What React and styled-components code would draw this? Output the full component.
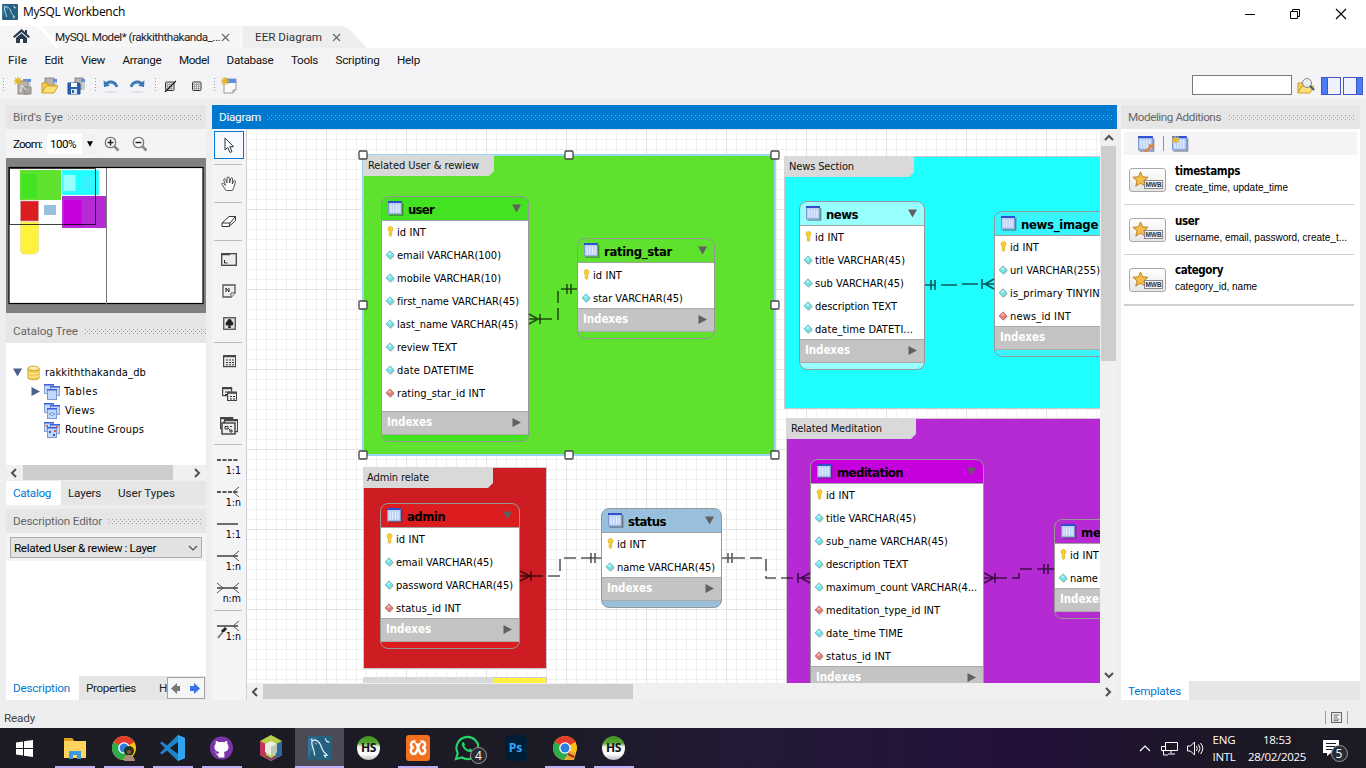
import React, { useLayoutEffect, useRef, useState } from 'react';
import styled, { createGlobalStyle, css } from 'styled-components';

const UI = `Roboto, "Liberation Sans", sans-serif`;
const TAHOMA = `"DejaVu Sans Condensed", "DejaVu Sans", sans-serif`;
const SEGOE = `"Open Sans", "Noto Sans", sans-serif`;

const GlobalStyle = createGlobalStyle`
  * { box-sizing: border-box; }
  html, body { margin: 0; padding: 0; overflow: hidden; }
  body { font: 11.7px ${UI}; color: #111; }
  svg { display: block; flex: none; }
`;

/* Text whose tracking is adjusted so that it takes the given width. */
const FitSpan = styled.span`
  display: inline-block;
  white-space: nowrap;
`;
function Fit({ w, children }) {
  const ref = useRef(null);
  const [spacing, setSpacing] = useState(0);
  useLayoutEffect(() => {
    const natural = ref.current.getBoundingClientRect().width;
    setSpacing((w - natural) / String(children).length);
  }, [w, children]);
  return <FitSpan ref={ref} style={{ letterSpacing: `${spacing}px` }}>{children}</FitSpan>;
}

const Screen = styled.div`
  width: 1366px;
  height: 768px;
  display: flex;
  flex-direction: column;
  background: #eeeef0;
  overflow: hidden;
`;

/* ---------- window frame ---------- */
const TitleBar = styled.header`
  height: 26px;
  display: flex;
  background: #fff;
  justify-content: space-between;
`;
const TitleLeft = styled.div`
  display: flex;
  align-items: center;
  gap: 5px;
  padding: 0 0 3px 2px;
  font: 12px ${SEGOE};
  color: #000;
`;
const WindowButtons = styled.div`
  display: flex;
  padding: 7px 19px 0 0;
  gap: 34px;
`;
const TabStrip = styled.div`
  height: 22px;
  display: flex;
  background: #fff;
`;
const HomeTab = styled.div`
  width: 56px;
  padding: 2px 0 0 13px;
  background: #f6f6f7;
  clip-path: polygon(0 0, 35px 0, 40px 3px, 56px 100%, 0 100%);
`;
const DocTab = styled.div`
  display: flex;
  align-items: center;
  background: ${p => (p.$active ? '#eeeef0' : '#f6f6f7')};
  ${p => p.$active
    ? css`width: 125px; margin-left: 1px; padding-left: 13px; gap: 10px; color: #333;
        clip-path: polygon(0 0, 101px 0, 107px 3px, 125px 100%, 0 100%);`
    : css`width: 199px; margin-left: -14px; padding-left: 13px; gap: 1px; color: #222;
        clip-path: polygon(0 0, 100% 0, 100% 100%, 18px 100%);`}
`;
const MenuBar = styled.nav`
  height: 24px;
  display: flex;
  align-items: center;
  gap: 17.5px;
  padding-left: 8px;
  background: #f4f4f7;
`;
const Toolbar = styled.div`
  height: 27px;
  display: flex;
  align-items: center;
  background: #f4f4f7;
  padding-right: 3px;
`;
const Slot = styled.div`
  width: ${p => p.$w}px;
  display: flex;
  justify-content: center;
`;
const Grip = styled.div`
  width: 1px;
  height: 15px;
  background: repeating-linear-gradient(#999 0 1px, transparent 1px 3px);
`;
const Spacer = styled.div`flex: 1;`;
const SearchBox = styled.div`
  width: 100px;
  height: 20px;
  border: 1px solid #7a7a7a;
  background: #fff;
  margin-right: 5px;
  margin-top: -2px;
`;
const PanelToggle = styled.div`
  width: 20px;
  height: 18px;
  margin-left: ${p => (p.$right ? 2 : 6)}px;
  border: 1px solid #4059c4;
  background: ${p => (p.$right
    ? 'linear-gradient(90deg, #f0f1fc 12px, #4059c4 12px 13px, #4a7df5 13px)'
    : 'linear-gradient(90deg, #4a7df5 5px, #4059c4 5px 6px, #f0f1fc 6px)')};
`;

/* ---------- docked panels ---------- */
const Body = styled.main`
  height: 601px;
  display: flex;
  padding: 6px 6px 0;
`;
const LeftDock = styled.aside`
  width: 200px;
  display: flex;
  flex-direction: column;
`;
const PanelHead = styled.div`
  height: ${p => (p.$tall ? 30 : 24)}px;
  flex: none;
  display: flex;
  align-items: center;
  gap: ${p => p.$gap || 5}px;
  padding: ${p => (p.$tall ? 6 : 0)}px ${p => (p.$flush ? 0 : 5)}px 0 7px;
  background: ${p => (p.$blue ? '#0078d0' : '#e6e6e6')};
  color: ${p => (p.$blue ? '#fff' : '#666')};
`;
const Dots = styled.div`
  flex: 1;
  height: 5px;
  --dot: ${p => (p.$blue ? '#5eaee6' : '#a0a0a0')};
  background-image: linear-gradient(90deg, var(--dot) 1px, transparent 1px),
    linear-gradient(90deg, var(--dot) 1px, transparent 1px),
    linear-gradient(90deg, var(--dot) 1px, transparent 1px);
  background-size: 4px 1px;
  background-position: 0 0, 2px 2px, 0 4px;
  background-repeat: repeat-x;
`;
const ZoomRow = styled.div`
  height: 29px;
  display: flex;
  align-items: center;
  padding-left: 7px;
  background: #f4f4f7;
  color: #000;
`;
const ZoomField = styled.div`
  display: flex;
  align-items: center;
  margin: 0 5px 0 5px;
  height: 20px;
  background: #fff;
  padding-left: 3px;
`;
const ZoomArrow = styled.div`
  width: 16px;
  height: 20px;
  margin-left: 6px;
  display: flex;
  align-items: center;
  justify-content: center;
  background: #f2f2f2;
`;
const Tree = styled.div`
  height: 122px;
  padding-top: 20px;
  background: #fff;
  font: 11px ${TAHOMA};
  color: #000;
`;
const TreeRow = styled.div`
  height: 19px;
  display: flex;
  align-items: center;
  gap: ${p => p.$gap || 5}px;
  padding-left: ${p => p.$indent}px;
`;
const HScroll = styled.div`
  height: 15px;
  flex: none;
  display: flex;
  align-items: center;
  justify-content: space-between;
  background: #f0f0f0;
  padding: 0 4px 0 3px;
  margin-top: ${p => p.$gap || 0}px;
`;
const HThumb = styled.div`
  height: 15px;
  width: ${p => p.$w}px;
  margin: 0 auto 0 ${p => p.$x}px;
  background: #cdcdcd;
`;
const Tabs = styled.div`
  height: ${p => p.$h || 24}px;
  display: flex;
  background: #e6e6e6;
  color: #222;
`;
const Tab = styled.div`
  display: flex;
  align-items: center;
  overflow: hidden;
  padding-left: 7px;
  width: ${p => p.$w}px;
  ${p => p.$on && css`background: #fff; color: #0078d0;`}
`;
const TabArrows = styled.div`
  width: 38px;
  height: 22px;
  margin: 1px 1px 0 0;
  border: 1px solid #a5a5a5;
  background: #f5f5f5;
  display: flex;
  align-items: center;
  justify-content: space-around;
`;
const ComboRow = styled.div`
  height: 28px;
  padding: 4px 4px 0;
  background: #f4f4f7;
`;
const Combo = styled.div`
  height: 21px;
  display: flex;
  align-items: center;
  justify-content: space-between;
  padding: 0 3px;
  border: 1px solid #acacac;
  background: #e2e2e2;
  color: #000;
`;
const Blank = styled.div`
  flex: 1;
  background: #fff;
`;
const HGap = styled.div`
  height: 4px;
  flex: none;
`;
const LowBlank = styled.div`
  height: 115px;
  background: #fff;
`;

/* ---------- diagram editor ---------- */
const Center = styled.section`
  width: 905px;
  margin: 0 4px 0 6px;
  display: flex;
  flex-direction: column;
`;
const Editor = styled.div`
  display: flex;
  height: 571px;
`;
const ToolColumn = styled.div`
  width: 35px;
  padding: 2px 4px 0 2px;
  background: #f4f4f7;
  border-right: 1px solid #d0d0d4;
`;
const Tool = styled.div`
  height: ${p => p.$h}px;
  width: 30px;
  display: flex;
  align-items: center;
  justify-content: center;
  ${p => p.$on && css`border: 1px solid #0078d7; background: #f6fafe;`}
`;
const ToolLine = styled.div`
  height: 1px;
  background: #bbb;
  margin: ${p => p.$t}px 0 ${p => p.$b}px;
`;
const RelTool = styled.div`
  height: 32px;
  padding: 9px 1px 0 2px;
  font: 10.500px/9px "DejaVu Sans Condensed", "DejaVu Sans", sans-serif;
  text-align: right;
  color: #000;
`;
const View = styled.div`
  width: 870px;
`;
const ViewTop = styled.div`
  display: flex;
  height: 554px;
`;
const Canvas = styled.div`
  position: relative;
  width: 853px;
  height: 554px;
  overflow: hidden;
  background-color: #fff;
  background-image: linear-gradient(90deg, #e3e3e3 1px, transparent 1px),
    linear-gradient(#e3e3e3 1px, transparent 1px),
    linear-gradient(90deg, #f0f0f0 1px, transparent 1px),
    linear-gradient(#f0f0f0 1px, transparent 1px);
  background-size: 80px 80px, 80px 80px, 10px 10px, 10px 10px;
  background-position: -1px 0;
`;
const VScroll = styled.div`
  width: 17px;
  padding: 4px 1px 3px 1px;
  display: flex;
  flex-direction: column;
  align-items: center;
  background: #f0f0f0;
`;
const VThumb = styled.div`
  width: 15px;
  height: 215px;
  margin: 3px 0 auto;
  background: #cdcdcd;
`;
const LayerBox = styled.div`
  position: absolute;
  left: ${p => p.$x - 247}px;
  top: ${p => p.$y - 129}px;
  width: ${p => p.$w}px;
  height: ${p => p.$h}px;
  background: ${p => p.$color};
  border: ${p => (p.$on ? '2px solid #98d6f4' : '1px solid #cfc6d0')};
`;
const LayerTab = styled.div`
  width: ${p => (p.$on ? 131 : 130)}px;
  height: 21px;
  margin: -1px 0 0 -1px;
  padding: 0 0 1px ${p => p.$pad}px;
  display: flex;
  align-items: center;
  background: #d9d9d9;
  color: #111;
  font: 11px ${TAHOMA};
  clip-path: polygon(0 0, 100% 0, 100% calc(100% - 5px), calc(100% - 5px) 100%, 0 100%);
`;
const TableBox = styled.div`
  position: absolute;
  left: ${p => p.$x - 247}px;
  top: ${p => p.$y - 129}px;
  width: ${p => p.$w}px;
  border: 1px solid #979797;
  border-radius: 8px;
  overflow: hidden;
  background: ${p => p.$color};
  font: 11px ${TAHOMA};
  color: #000;
`;
const TableHead = styled.div`
  height: 24px;
  display: flex;
  align-items: center;
  gap: 4px;
  padding: 0 7px 0 6px;
  border-bottom: 1px solid #a2a2a2;
  font-size: 13px;
  font-weight: bold;
`;
const TableName = styled.div`
  flex: 1;
  min-width: 0;
  padding-top: 2px;
`;
const TableBody = styled.div`
  height: ${p => p.$h}px;
  padding-top: ${p => p.$pad || 0}px;
  background: #fff;
`;
const Column = styled.div`
  height: 23px;
  display: flex;
  align-items: center;
  gap: 2px;
  padding: 0 0 0 4px;
`;
const Mark = styled.div`
  width: 10px;
  display: flex;
  justify-content: center;
  margin: 0 0 2px -1px;
  padding-right: ${p => (p.$key ? 0 : 1)}px;
`;
const IndexRow = styled.div`
  height: 24px;
  display: flex;
  align-items: center;
  justify-content: space-between;
  padding: 0 7px 2px 5px;
  border: 1px solid #aaa;
  border-width: 1px 0;
  background: #c4c4c4;
  color: #fff;
  font-size: 11.5px;
  font-weight: bold;
`;
const TableFoot = styled.div`height: 6px;`;
const Links = styled.svg`
  position: absolute;
  inset: 0;
`;

/* ---------- modeling additions ---------- */
const RightDock = styled.aside`
  width: 239px;
  display: flex;
  flex-direction: column;
  background: #fff;
`;
const MiniBar = styled.div`
  height: 23px;
  margin: 3px 3px 0;
  padding-left: 14px;
  display: flex;
  align-items: center;
  gap: 8px;
  background: #f4f4f7;
`;
const MiniSep = styled.div`
  width: 1px;
  height: 15px;
  background: #8a93ad;
`;
const Template = styled.div`
  height: ${p => p.$h}px;
  display: flex;
  margin: 0 6px 0 3px;
  padding: ${p => p.$t}px 0 0 5px;
  gap: 9px;
  border-bottom: ${p => p.$line || 1}px solid #cfcfcf;
`;
const TemplateText = styled.div`
  display: flex;
  flex-direction: column;
  font: 10px/14px "Liberation Sans", sans-serif;
  color: #000;
  margin-top: -3px;
`;
const TemplateTitle = styled.div`
  font: bold 11.5px/15px ${TAHOMA};
  margin-bottom: 2px;
`;
const Badge = styled.div`
  width: 37px;
  height: 24px;
  margin-top: ${p => p.$t}px;
  border: 1px solid #a8a8a8;
  border-radius: 3px;
  background: linear-gradient(#fff, #e6e6e6);
  display: flex;
  padding: 2px 0 0 2px;
`;
const BadgeLabel = styled.div`
  height: 9px;
  width: 19px;
  margin: 9px 0 0 -5px;
  background: #f4f4f4;
  border: 1px solid #888;
  color: #333;
  font: bold 6.5px/7px "Liberation Sans", sans-serif;
  text-align: center;
  z-index: 1;
`;

/* ---------- status bar and taskbar ---------- */
const StatusBar = styled.footer`
  height: 28px;
  display: flex;
  align-items: center;
  padding: 7px 18px 0 4px;
  gap: 5px;
  color: #444;
`;
const StatusSep = styled.div`
  width: 1px;
  height: 13px;
  background: #9a9ab0;
`;
const Taskbar = styled.div`
  height: 40px;
  display: flex;
  background: linear-gradient(90deg, #1c1c24 0%, #1c1b26 40%, #231936 55%, #24103a 75%, #1c1724 90%, #1b1b24 100%);
  color: #fff;
`;
const Task = styled.div`
  width: 49px;
  display: flex;
  align-items: center;
  justify-content: center;
  box-shadow: ${p => (p.$open ? 'inset 0 -2px #bfaef5' : 'none')};
  background: ${p => (p.$active ? '#4b4a57' : 'transparent')};
  ${p => p.$open && !p.$active && css`width: 40px; margin: 0 4px 0 5px; padding-right: 1px;`}
`;
const Start = styled.div`
  width: 50px;
  padding-right: 2px;
  display: flex;
  align-items: center;
  justify-content: center;
`;
const Tray = styled.div`
  margin-left: auto;
  display: flex;
  align-items: center;
  padding-right: 11px;
  font: 11.5px/17px ${SEGOE};
  text-align: center;
`;
const TrayText = styled.div`
  width: ${p => p.$w}px;
  margin-left: ${p => p.$l}px;
  margin-top: -1px;
`;

/* ---------- drawings ---------- */
const Dolphin = ({ size = 15 }) => (
  <svg width={size} height={size} viewBox="0 0 16 16">
    <rect width="16" height="16" rx="1" fill="#24607f" />
    <path d="M0 16V1h6z" fill="#3d81a3" opacity=".6" />
    <path d="M4.500 13C4 10 3.800 9 3.200 7.500 2.300 5 2 4 3 3c2.500-.8 4.500 1 5.500 3.200.6 1.500.8 2.800 2 4.300l2.300 2.300-2 .1 1.200 1.600" fill="none" stroke="#e6f2f8" strokeWidth=".8" />
    <path d="M3 3L2 2M5 5l.8.3" stroke="#e6f2f8" strokeWidth=".8" />
    <path d="M11.500 1.500l.8 1.800 2 .8-1.800-.1z" fill="#fff" stroke="#fff" strokeWidth=".4" />
  </svg>
);
const HomeIcon = () => (
  <svg width="17" height="16" viewBox="0 0 17 16">
    <path d="M8.500 1L0 8.500l1.500 1.500 7-6 7 6L17 8.500 14 6V2h-2v2z" fill="#2b3a50" />
    <path d="M3 10l5.500-4.700L14 10v5h-4v-4H7v4H3z" fill="#2b3a50" />
  </svg>
);
const TabClose = () => (
  <svg width="9" height="9" viewBox="0 0 9 9"><path d="M1 1l7 7M8 1L1 8" stroke="#666" strokeWidth="1.1" /></svg>
);
const Spark = () => (
  <path d="M4 0v8M0 4h8M1 1l6 6M7 1L1 7" stroke="#e6b62c" strokeWidth="1.300" />
);
const NewModel = () => (
  <svg width="18" height="18" viewBox="0 0 18 18">
    <rect x="9" y="2" width="8" height="11" fill="#d4d8e0" /><rect x="9" y="2" width="8" height="3" fill="#5b90e8" />
    <rect x="4" y="4" width="10" height="13" fill="#b8b4ad" stroke="#8b8984" /><path d="M10 10h7v7h-7z" fill="#aaa69f" stroke="#8b8984" /><path d="M6 15l2-7 4 5" fill="none" stroke="#e8e8e8" />
    <Spark />
  </svg>
);
const FolderIcon = ({ lens }) => (
  <svg width="18" height="18" viewBox="0 0 18 18">
    {!lens && <><rect x="4" y="1" width="9" height="11" fill="#b8b4ad" stroke="#8b8984" /><rect x="13" y="2" width="3" height="8" fill="#c9cdd6" /><rect x="12" y="2" width="4" height="3" fill="#5b90e8" /></>}
    <path d="M1 16V6h5l1 2h7v3" fill="#f3cf5a" stroke="#c79a25" />
    <path d="M1 16l4-7h12l-4 7z" fill="#fbe07b" stroke="#d2a22b" />
    {lens && <><circle cx="10" cy="6" r="4.500" fill="#e8eef2" fillOpacity=".85" stroke="#888" /><path d="M13 9l4 4" stroke="#555" strokeWidth="2" /></>}
  </svg>
);
const SaveIcon = () => (
  <svg width="18" height="18" viewBox="0 0 18 18">
    <rect x="8" y="1" width="8" height="11" fill="#b8b4ad" stroke="#8b8984" /><rect x="14" y="2" width="4" height="3" fill="#5b90e8" /><rect x="15" y="5" width="3" height="8" fill="#c9cdd6" />
    <path d="M1 6h11l1 1v10H1z" fill="#2962aa" stroke="#1f4f8e" /><rect x="4" y="6" width="6" height="4" fill="#fff" /><rect x="4" y="12" width="6" height="5" fill="#dce6f2" /><rect x="5" y="13" width="2" height="3" fill="#2962aa" />
  </svg>
);
const Undo = ({ flip }) => (
  <svg width="16" height="14" viewBox="0 0 16 14">
    <g transform={flip ? 'translate(16 0) scale(-1 1)' : undefined}>
      <path d="M.5 1.500L1 8l6-1.300-2-1.700c3-1.300 6-.5 8 3.500l2.200-1.200C13.500 2 8 0 3 3z" fill="#3b7bb8" />
      <ellipse cx="8" cy="13" rx="7" ry="1" fill="#e0e0e4" />
    </g>
  </svg>
);
const GridIcon = ({ off }) => (
  <svg width="12" height="12" viewBox="0 0 12 12">
    <rect x="1.500" y="2" width="8.500" height="8.500" rx="1" fill="#eee" stroke="#333" />
    <path d="M3.500 2v8M5.500 2v8M7.500 2v8M2 4.500h8M2 6.500h8M2 8.500h8" stroke="#999" strokeWidth=".8" />
    {off && <path d="M1 12L12 1" stroke="#111" strokeWidth="1.200" />}
  </svg>
);
const NewNote = () => (
  <svg width="16" height="17" viewBox="0 0 16 17">
    <path d="M3 2h12v11l-3 3H3z" fill="#fafafa" stroke="#999" /><rect x="3" y="2" width="12" height="4" fill="#5b90e8" />
    <path d="M12 16v-3h3" fill="#ddd" stroke="#999" /><Spark />
  </svg>
);
const ZoomGlass = ({ plus }) => (
  <svg width="16" height="16" viewBox="0 0 16 16">
    <circle cx="6.500" cy="6.500" r="5.200" fill="#fafafa" stroke="#777" strokeWidth="1.300" />
    <path d={plus ? 'M3.500 6.500h6M6.500 3.500v6' : 'M3.500 6.500h6'} stroke="#222" strokeWidth="1.500" />
    <path d="M10.500 10.500l4 4" stroke="#888" strokeWidth="2.500" />
  </svg>
);
const Triangle = ({ dir, color = '#606060', s = 9 }) => (
  <svg width={s} height={s} viewBox="0 0 9 9">
    <path d={dir === 'down' ? 'M0 .5h9L4.500 8.500z' : 'M.5 0v9L9 4.500z'} fill={color} />
  </svg>
);
const Chevron = ({ dir, color = '#505050', s = 10, t = 2 }) => {
  const d = { left: 'M7 1L3 5l4 4', right: 'M3 1l4 4-4 4', up: 'M1 7l4-4 4 4', down: 'M1 3l4 4 4-4' }[dir];
  return <svg width={s} height={s} viewBox="0 0 10 10"><path d={d} fill="none" stroke={color} strokeWidth={t} /></svg>;
};
const DbIcon = () => (
  <svg width="13" height="16" viewBox="0 0 14 16">
    <path d="M1 3v10c0 3 12 3 12 0V3" fill="#f2cc4f" stroke="#c89d28" />
    <path d="M1 7c0 2.500 12 2.500 12 0M1 10.500c0 2.500 12 2.500 12 0" fill="none" stroke="#fff3b5" />
    <ellipse cx="7" cy="3" rx="6" ry="2.300" fill="#fdeeb0" stroke="#c89d28" />
  </svg>
);
const StackIcon = ({ kind }) => (
  <svg width="16" height="16" viewBox="0 0 16 16">
    <rect x=".5" y=".5" width="9" height="9" fill="#c4d6f5" stroke="#88a4dc" /><rect width="10" height="1.500" fill="#3a5fd8" />
    <rect x="6.500" y="2.500" width="9" height="9" fill="#c4d6f5" stroke="#88a4dc" /><rect x="6" y="2" width="10" height="1.500" fill="#3a5fd8" />
    <rect x="3.500" y="5.500" width="9" height="10" fill="#c3d7f8" stroke="#7b98d8" /><rect x="3" y="5" width="10" height="1.500" fill="#3a5fd8" />
    {kind === 'view' && <path d="M5 11q3-3 6 0-3 3-6 0z" fill="#eef" stroke="#6a94d8" />}
    {kind === 'routine' && <><path d="M5 9h2v2H5zM9 12h2v2H9z" fill="#2a59c0" /><path d="M10 8h2v2h-2zM12 4h2v2h-2z" fill="#e05a48" /><path d="M2 3h2v2H2z" fill="#e05a48" /></>}
  </svg>
);
const TableIcon = ({ spark, wrench, s = 15 }) => (
  <svg width={s + 1} height={s} viewBox="0 0 16 15">
    <path d="M1.500 14h13.200V2" fill="none" stroke="#333" strokeOpacity=".5" strokeWidth="1.400" />
    <rect x=".5" y="1" width="13" height="12" fill="#b9cff4" stroke="#7d99cf" /><rect width="14" height="2" fill="#2d4fd0" />
    <path d="M3 3.500v8M5.700 3.500v8M8.400 3.500v8M11 3.500v8" stroke="#eef4ff" strokeWidth="1" />
    {spark && <g transform="translate(-.5 -.5) scale(.95)"><Spark /></g>}
    {wrench && <path d="M5.500 14.500l5-4.500-.5-3 2.500 1.500L14.500 7l.5 3-3 1.500-4.500 3.500z" fill="#e97b30" />}
  </svg>
);
const KeyIcon = () => (
  <svg width="9" height="11" viewBox="0 0 9 11">
    <path d="M4.500.5C1.600.5 1.400 4 3.200 5.300V9.500l1.300 1 1.300-1V5.300C7.600 4 7.400.5 4.500.5z" fill="#f8cd2e" stroke="#d9a92a" strokeWidth=".6" />
  </svg>
);
const Diamond = ({ red }) => (
  <svg width="10" height="10" viewBox="0 0 10 10">
    <path d="M5.500 1.500L10 6l-4 4-4-4z" fill="#000" opacity=".2" />
    <path d="M5 .8L9 5 5 9 1 5z" fill={red ? '#e0807c' : '#74e2e6'} stroke={red ? '#c06864' : '#6ab4ba'} strokeWidth=".8" />
    <path d="M5 2L3 4.500h3z" fill="#fff" opacity=".7" />
  </svg>
);
const StarIcon = () => (
  <svg width="17" height="17" viewBox="0 0 18 18">
    <path d="M9 1l2.200 5.200 5.800.4-4.400 3.800 1.300 5.600L9 13l-5 3 1.400-5.600L1 6.600l5.800-.4z" fill="#f6bd48" stroke="#b9801d" />
  </svg>
);

const Pointer = () => (
  <svg width="14" height="17" viewBox="0 0 14 17"><path d="M3 1v12l2.700-2.500 2.300 5 2-1-2.200-4.800h3.700z" fill="#fff" stroke="#333" /></svg>
);
const Hand = () => (
  <svg width="16" height="16" viewBox="0 0 16 16">
    <path d="M5 14.500L1 8.500c-.8-1.500 1-2 2-.5L4.500 9.500 2.800 4c-.3-1.500 1.400-1.800 1.900-.5L6 7V2c0-1.600 2-1.600 2.200 0L8.700 7l1-4.500c.4-1.400 2-1 1.900.5L11.300 8l1.500-3c.6-1.200 2-.7 1.700.6L13 11l-1.500 3.500z" fill="#fff" stroke="#444" strokeWidth=".9" />
  </svg>
);
const Eraser = () => (
  <svg width="16" height="13" viewBox="0 0 16 13">
    <path d="M1 8L8 1.500h6.500L9 8zM1 8v3.500h7L9 8M8 11.500l6.500-6v-4" fill="#fff" stroke="#333" />
  </svg>
);
const LayerTool = () => (
  <svg width="16" height="13" viewBox="0 0 16 13">
    <rect x=".7" y=".7" width="14.600" height="11.600" fill="#eee" stroke="#444" strokeWidth="1.300" /><path d="M1 1.500h8" stroke="#444" strokeWidth="1.500" /><path d="M3.500 7v3h3" fill="none" stroke="#222" />
  </svg>
);
const NoteTool = () => (
  <svg width="14" height="14" viewBox="0 0 14 14">
    <path d="M1 1h12v8l-4 4H1z" fill="#eee" stroke="#555" strokeWidth="1.300" /><path d="M9 13V9h4" fill="#fff" stroke="#555" /><path d="M4 8V4l3 4V4" fill="none" stroke="#222" />
  </svg>
);
const ImageTool = () => (
  <svg width="13" height="13" viewBox="0 0 13 13">
    <rect x=".7" y=".7" width="11.600" height="11.600" fill="#ddd" stroke="#555" strokeWidth="1.300" />
    <path d="M6.500 2C4.500 2 4.500 4 4 4.500 2.500 5 2 8.300 4 8.500h1.700L5 11h3L7.300 8.500H9c2-.2 1.500-3.500 0-4C8.500 4 8.500 2 6.500 2z" fill="#222" />
  </svg>
);
const MiniTable = ({ x = 0, y = 0, w = 12, h = 11 }) => (
  <g transform={`translate(${x} ${y})`}>
    <rect x=".6" y=".6" width={w} height={h} fill="#eee" stroke="#444" strokeWidth="1.200" /><path d={`M1 1.500h${w}`} stroke="#444" strokeWidth="1.500" />
    <path d={`M3 5h${w - 4}M3 7.500h${w - 4}`} stroke="#333" strokeWidth="1.100" strokeDasharray="2 1" />
  </g>
);
const TableTool = () => (
  <svg width="13" height="13" viewBox="0 0 13 13"><MiniTable /><path d="M3 9.800h8" stroke="#333" strokeDasharray="2 1" /></svg>
);
const ViewTool = () => (
  <svg width="15" height="14" viewBox="0 0 15 14"><MiniTable w={9} h={8} /><MiniTable x={5} y={4.500} w={9} h={8.500} /></svg>
);
const RoutineTool = () => (
  <svg width="18" height="18" viewBox="0 0 18 18">
    <MiniTable w={12} h={11} /><MiniTable x={4} y={2} w={13} h={12} /><rect x="2" y="6" width="13" height="11" fill="#eee" stroke="#333" strokeWidth="1.300" />
    <path d="M5 9.500h3v2.500H5zM10 9.500h2M10 13h2v2h-2zM8 11l2 2" fill="none" stroke="#333" />
  </svg>
);
const RelLine = ({ left, right, dashed, dropper }) => (
  <svg width="24" height="12" viewBox="0 0 24 12">
    <path d="M1 6h21" stroke="#222" strokeWidth="1.300" strokeDasharray={dashed ? '4 1.500' : undefined} />
    {right && <path d="M23 1l-6 5 6 5" fill="none" stroke="#555" strokeWidth="1" />}
    {left && <path d="M1 1l6 5-6 5" fill="none" stroke="#555" strokeWidth="1" />}
    {dropper && <path d="M10 8l-4 4" stroke="#222" strokeWidth="3" />}
  </svg>
);
/* Tip of the pick-relation dropper, beside its caption. */
const DropperTip = styled.svg`
  float: left;
  margin: -1px 0 0 1px;
`;

const Overview = () => (
  <svg width="200" height="155" viewBox="6 158 200 155">
    <rect x="6" y="158" width="200" height="155" fill="#808080" />
    <rect x="9" y="167.500" width="194" height="136" fill="#fff" stroke="#000" strokeWidth="1.200" />
    <rect x="20" y="170" width="41" height="30" fill="#5ee22e" /><rect x="22" y="174" width="15" height="24" fill="#43e322" /><rect x="40" y="178" width="14" height="10" fill="#5ee22e" />
    <rect x="62" y="170" width="37" height="25" fill="#20ffff" stroke="#9de8e8" strokeWidth=".6" /><rect x="63.500" y="175" width="12" height="16" fill="#98ffff" /><rect x="82" y="176" width="12" height="14" fill="#38f4ff" />
    <rect x="20.500" y="201" width="18" height="20" fill="#db1d20" stroke="#c8a0a0" strokeWidth=".6" />
    <rect x="44" y="205" width="12" height="10" fill="#98bfdb" />
    <rect x="62" y="196" width="44.500" height="32" fill="#b52ad2" /><rect x="64" y="200" width="17.500" height="26" fill="#c400dc" />
    <path d="M20.500 222h18v30h-2.500v2h-14v-2h-1.500z" fill="#fef23c" stroke="#e5dd90" strokeWidth=".6" />
    <path d="M106.500 168v136" stroke="#777" />
    <path d="M9.500 168.500h86v56h-86z" fill="none" stroke="#000" strokeOpacity=".75" />
  </svg>
);

/* ---------- data ---------- */
const LAYERS = [
  { name: 'Related User & rewiew', tw: 111, x: 362, y: 154, w: 414, h: 302, color: '#5ee22e', pad: 5, on: true },
  { name: 'News Section', tw: 65, x: 784, y: 156, w: 400, h: 253, color: '#20ffff', pad: 5 },
  { name: 'Admin relate', tw: 62, x: 363, y: 467, w: 184, h: 202, color: '#cd1c22', pad: 4 },
  { name: 'Related Meditation', tw: 91, x: 786, y: 418, w: 400, h: 400, color: '#b52ad2', pad: 5 },
  { name: 'Donate relate', tw: 66, x: 363, y: 677, w: 184, h: 200, color: '#fef23c', pad: 4 },
];
// Column kinds: k = primary key, c = plain column, f = foreign key.
const TABLES = [
  { name: 'user', tw: 26, x: 381, y: 196, w: 148, bh: 190, color: '#43e322', cols: [['k', 'id INT', 29], ['c', 'email VARCHAR(100)', 104], ['c', 'mobile VARCHAR(10)', 104], ['c', 'first_name VARCHAR(45)', 122], ['c', 'last_name VARCHAR(45)', 121], ['c', 'review TEXT', 60], ['c', 'date DATETIME', 77], ['f', 'rating_star_id INT', 88]] },
  { name: 'rating_star', tw: 68, x: 577, y: 238, w: 138, bh: 45, pad: 1, color: '#5ee22e', cols: [['k', 'id INT', 29], ['c', 'star VARCHAR(45)', 90]] },
  { name: 'news', tw: 32, x: 799, y: 201, w: 126, bh: 113, color: '#98ffff', cols: [['k', 'id INT', 29], ['c', 'title VARCHAR(45)', 90], ['c', 'sub VARCHAR(45)', 89], ['c', 'description TEXT', 82], ['c', 'date_time DATETI...', 98]] },
  { name: 'news_image', tw: 77, x: 994, y: 211, w: 150, bh: 90, color: '#38f4ff', cols: [['k', 'id INT', 29], ['c', 'url VARCHAR(255)', 90], ['c', 'is_primary TINYINT', 96], ['f', 'news_id INT', 61]] },
  { name: 'admin', tw: 38, x: 380, y: 503, w: 140, bh: 90, color: '#db1d20', cols: [['k', 'id INT', 29], ['c', 'email VARCHAR(45)', 97], ['c', 'password VARCHAR(45)', 117], ['f', 'status_id INT', 65]] },
  { name: 'status', tw: 38, x: 601, y: 508, w: 121, bh: 44, color: '#98bfdb', cols: [['k', 'id INT', 29], ['c', 'name VARCHAR(45)', 98]] },
  { name: 'meditation', tw: 66, x: 810, y: 459, w: 174, bh: 182, color: '#c400dc', cols: [['k', 'id INT', 29], ['c', 'title VARCHAR(45)', 90], ['c', 'sub_name VARCHAR(45)', 122], ['c', 'description TEXT', 82], ['c', 'maximum_count VARCHAR(4...', 151], ['f', 'meditation_type_id INT', 114], ['c', 'date_time TIME', 77], ['f', 'status_id INT', 65]] },
  { name: 'meditation_type', tw: 103, x: 1054, y: 519, w: 150, bh: 44, color: '#b52ad2', cols: [['k', 'id INT', 29], ['c', 'name VARCHAR(45)', 98]] },
];
const HANDLES = [[363, 155], [569, 155], [775, 155], [363, 305], [775, 305], [363, 455], [569, 455], [775, 455]];
const MENUS = [['File', 19], ['Edit', 19], ['View', 24], ['Arrange', 39], ['Model', 30], ['Database', 47], ['Tools', 27], ['Scripting', 44], ['Help', 23]];

function DbTable({ t }) {
  return (
    <TableBox $x={t.x} $y={t.y} $w={t.w} $color={t.color}>
      <TableHead>
        <TableIcon />
        <TableName><Fit w={t.tw}>{t.name}</Fit></TableName>
        <Triangle dir="down" />
      </TableHead>
      <TableBody $h={t.bh} $pad={t.pad}>
        {t.cols.map(([kind, text, w]) => (
          <Column key={text}>
            <Mark $key={kind === 'k'}>{kind === 'k' ? <KeyIcon /> : <Diamond red={kind === 'f'} />}</Mark>
            <Fit w={w}>{text}</Fit>
          </Column>
        ))}
      </TableBody>
      <IndexRow><Fit w={45}>Indexes</Fit><Triangle /></IndexRow>
      <TableFoot />
    </TableBox>
  );
}

function Connectors() {
  return (
    <Links width="853" height="554" viewBox="247 129 853 554">
      <g fill="none" stroke="#000" strokeOpacity=".65" strokeWidth="1.600">
        <g strokeDasharray="12 5">
          <path d="M540 319h18v-30h9" />
          <path d="M935 285h25v-1h22" strokeDasharray="16 6" strokeDashoffset="-6" />
          <path d="M531 576h29v-18h31" />
          <path d="M733 558h33v20h32" />
          <path d="M995 578h24v-9h25" />
        </g>
        <path d="M529 314l9 5-9 5M529 319h11M540 314v10M567 284v10M571 284v10M567 289h10" />
        <path d="M931 280v10M935 280v10M925 285h10M982 279v10M994 279l-9 5 9 5M982 284h12" />
        <path d="M520 571l10 5-10 5M520 576h11M531 571v10M591 553v10M595 553v10M591 558h10" />
        <path d="M722 558h10M728 553v10M732 553v10M798 573v10M810 573l-9 5 9 5M798 578h12" />
        <path d="M984 573l10 5-10 5M984 578h11M995 573v10M1044 564v10M1048 564v10M1044 569h10" />
      </g>
      {HANDLES.map(([x, y]) => (
        <rect key={`${x}-${y}`} x={x - 4} y={y - 4} width="8" height="8" rx="1" fill="#fff" stroke="#444" strokeWidth="1.300" />
      ))}
    </Links>
  );
}

function Head({ title, w, ...rest }) {
  return (
    <PanelHead {...rest}>
      <Fit w={w}>{title}</Fit>
      <Dots $blue={rest.$blue} />
    </PanelHead>
  );
}

const TEMPLATES = [
  ['timestamps', 65, 'create_time, update_time', 113, 50, 12, 1, 1],
  ['user', 24, 'username, email, password, create_t...', 172, 50, 12, 1, 1],
  ['category', 48, 'category_id, name', 82, 51, 11, 2, 2],
];

/* Taskbar glyphs */
const Chrome = ({ children }) => (
  <svg width="26" height="26" viewBox="0 0 26 26">
    <circle cx="13" cy="13" r="12" fill="#fbc116" />
    <path d="M13 13L2.600 7A12 12 0 0 1 23.400 7z" fill="#e33b2e" />
    <path d="M13 13L2.600 7A12 12 0 0 0 12 25l6-9z" fill="#2da94f" />
    <path d="M13 7h10.400L23 6.500 13 5z" fill="#e33b2e" />
    <circle cx="13" cy="13" r="5.800" fill="#fff" /><circle cx="13" cy="13" r="4.500" fill="#2a7de1" />
    {children}
  </svg>
);
const HeidiBase = styled.div`
  width: 23px;
  height: 24px;
  border-radius: 50%;
  background: linear-gradient(#3f8f22 0, #58a932 30%, #f2f2f2 45%, #fff 75%, #bbb);
  color: #111;
  font: bold 12px/24px "Open Sans", sans-serif;
  text-align: center;
  letter-spacing: -.5px;
`;
const PsIcon = styled.div`
  width: 22px;
  height: 26px;
  border-radius: 4px;
  background: #001e36;
  color: #31a8ff;
  font: bold 12px/26px "Open Sans", sans-serif;
  text-align: center;
`;
const CountWrap = styled.div`position: relative;`;
const Count = styled.div`
  position: absolute;
  right: ${p => p.$r}px;
  bottom: ${p => p.$b}px;
  width: 17px;
  height: 17px;
  border: 1px solid #999;
  border-radius: 50%;
  background: #2b2b33;
  font: 12px/15px ${SEGOE};
  text-align: center;
  color: #fff;
`;

export default function App() {
  return (
    <Screen>
      <GlobalStyle />
      <TitleBar>
        <TitleLeft><Dolphin size={16} /><Fit w={102}>MySQL Workbench</Fit></TitleLeft>
        <WindowButtons>
          <svg width="12" height="14" viewBox="0 0 12 14"><path d="M2 7.500h10" stroke="#000" /></svg>
          <svg width="12" height="14" viewBox="0 0 12 14"><path d="M1.500 4.500h7v7h-7zM3.500 4.500v-2h7v7h-2" fill="none" stroke="#000" /></svg>
          <svg width="12" height="14" viewBox="0 0 12 14"><path d="M1 2l10 10M11 2L1 12" stroke="#000" strokeWidth="1.100" /></svg>
        </WindowButtons>
      </TitleBar>
      <TabStrip>
        <HomeTab><HomeIcon /></HomeTab>
        <DocTab><Fit w={165}>MySQL Model* (rakkiththakanda_...</Fit><TabClose /></DocTab>
        <DocTab $active><Fit w={67}>EER Diagram</Fit><TabClose /></DocTab>
      </TabStrip>
      <MenuBar>{MENUS.map(([m, w]) => <Fit key={m} w={w}>{m}</Fit>)}</MenuBar>
      <Toolbar>
        <Slot $w={7}><Grip /></Slot><Slot $w={3} />
        <Slot $w={26}><NewModel /></Slot>
        <Slot $w={27}><FolderIcon /></Slot>
        <Slot $w={26}><SaveIcon /></Slot>
        <Slot $w={12}><Grip /></Slot>
        <Slot $w={19}><Undo /></Slot>
        <Slot $w={34}><Undo flip /></Slot>
        <Slot $w={2}><Grip /></Slot>
        <Slot $w={28}><GridIcon off /></Slot>
        <Slot $w={26}><GridIcon /></Slot>
        <Slot $w={8}><Grip /></Slot>
        <Slot $w={22}><NewNote /></Slot>
        <Spacer />
        <SearchBox />
        <FolderIcon lens />
        <PanelToggle />
        <PanelToggle $right />
      </Toolbar>

      <Body>
        <LeftDock>
          <Head title="Bird's Eye" w={50} />
          <ZoomRow>
            <Fit w={29}>Zoom:</Fit>
            <ZoomField>
              <Fit w={26}>100%</Fit>
              <ZoomArrow><Triangle dir="down" color="#000" s={6} /></ZoomArrow>
            </ZoomField>
            <Slot $w={17}><ZoomGlass plus /></Slot>
            <Slot $w={39}><ZoomGlass /></Slot>
          </ZoomRow>
          <Overview />
          <Head title="Catalog Tree" w={65} $tall $flush $gap={7} />
          <Tree>
            <TreeRow $indent={7}><Triangle dir="down" color="#49618c" /><DbIcon /><Fit w={101}>rakkiththakanda_db</Fit></TreeRow>
            <TreeRow $indent={25} $gap={4}><Triangle color="#49618c" /><StackIcon /><Fit w={34}>Tables</Fit></TreeRow>
            <TreeRow $indent={38}><StackIcon kind="view" /><Fit w={30}>Views</Fit></TreeRow>
            <TreeRow $indent={38}><StackIcon kind="routine" /><Fit w={79}>Routine Groups</Fit></TreeRow>
          </Tree>
          <HScroll><Chevron dir="left" /><HThumb $x={4} $w={150} /><Chevron dir="right" /></HScroll>
          <Spacer />
          <Tabs>
            <Tab $on $w={55}><Fit w={38}>Catalog</Fit></Tab>
            <Tab $w={50}><Fit w={33}>Layers</Fit></Tab>
            <Tab $w={75}><Fit w={57}>User Types</Fit></Tab>
          </Tabs>
          <HGap />
          <Head title="Description Editor" w={89} $gap={6} />
          <ComboRow><Combo><Fit w={142}>Related User &amp; rewiew : Layer</Fit><Chevron dir="down" t={1.2} /></Combo></ComboRow>
          <LowBlank />
          <Tabs>
            <Tab $on $w={73}><Fit w={57}>Description</Fit></Tab>
            <Tab $w={73}><Fit w={50}>Properties</Fit></Tab>
            <Tab $w={15}><Fit w={35}>History</Fit></Tab>
            <TabArrows>
              <svg width="12" height="11" viewBox="0 0 12 11"><path d="M6 0v3h3v5H6v3L0 5.500z" fill="#777" /></svg>
              <svg width="12" height="11" viewBox="0 0 12 11"><path d="M5 0v3H1v5h4v3l6-5.500z" fill="#3970ee" /></svg>
            </TabArrows>
          </Tabs>
        </LeftDock>

        <Center>
          <Head title="Diagram" w={42} $blue $gap={6} />
          <Editor>
            <ToolColumn>
              <Tool $on $h={28}><Pointer /></Tool>
              <ToolLine $t={5} $b={0} />
              <Tool $h={37}><Hand /></Tool>
              <ToolLine $t={0} $b={0} />
              <Tool $h={37}><Eraser /></Tool>
              <ToolLine $t={0} $b={2} />
              <Tool $h={32}><LayerTool /></Tool>
              <Tool $h={32}><NoteTool /></Tool>
              <Tool $h={32}><ImageTool /></Tool>
              <ToolLine $t={3} $b={2} />
              <Tool $h={32}><TableTool /></Tool>
              <Tool $h={33}><ViewTool /></Tool>
              <Tool $h={31}><RoutineTool /></Tool>
              <ToolLine $t={3} $b={0} />
              <RelTool><RelLine dashed />1:1</RelTool>
              <RelTool><RelLine dashed right />1:n</RelTool>
              <RelTool><RelLine />1:1</RelTool>
              <RelTool><RelLine right />1:n</RelTool>
              <RelTool><RelLine left right />n:m</RelTool>
              <ToolLine $t={5} $b={0} />
              <RelTool>
                <RelLine right dropper />
                <DropperTip width="8" height="8" viewBox="0 0 8 8"><path d="M6 1L2 5.500 1 7" fill="none" stroke="#777" strokeWidth="1.800" /></DropperTip>
                1:n
              </RelTool>
            </ToolColumn>
            <View>
              <ViewTop>
                <Canvas>
                  {LAYERS.map(l => (
                    <LayerBox key={l.name} $x={l.x} $y={l.y} $w={l.w} $h={l.h} $color={l.color} $on={l.on}>
                      <LayerTab $on={l.on} $pad={l.pad}><Fit w={l.tw}>{l.name}</Fit></LayerTab>
                    </LayerBox>
                  ))}
                  {TABLES.map(t => <DbTable key={t.name} t={t} />)}
                  <Connectors />
                </Canvas>
                <VScroll><Chevron dir="up" /><VThumb /><Chevron dir="down" /></VScroll>
              </ViewTop>
              <HScroll $gap={1}><Chevron dir="left" /><HThumb $x={3} $w={370} /><Chevron dir="right" /></HScroll>
            </View>
          </Editor>
        </Center>

        <RightDock>
          <Head title="Modeling Additions" w={93} $gap={8} />
          <MiniBar><TableIcon wrench s={16} /><MiniSep /><TableIcon spark s={16} /></MiniBar>
          {TEMPLATES.map(([title, tw, sub, sw, h, top, line, drop]) => (
            <Template key={title} $h={h} $t={top} $line={line}>
              <Badge $t={drop}><StarIcon /><BadgeLabel>MWB</BadgeLabel></Badge>
              <TemplateText>
                <TemplateTitle><Fit w={tw}>{title}</Fit></TemplateTitle>
                <Fit w={sw}>{sub}</Fit>
              </TemplateText>
            </Template>
          ))}
          <Blank />
          <Tabs $h={19}><Tab $on $w={68}><Fit w={53}>Templates</Fit></Tab></Tabs>
        </RightDock>
      </Body>

      <StatusBar>
        <Fit w={31}>Ready</Fit>
        <Spacer />
        <StatusSep />
        <svg width="11" height="11" viewBox="0 0 11 11"><rect x=".6" y=".6" width="9.800" height="9.800" fill="#fff" stroke="#555" /><path d="M2.500 3h6M2.500 5h4M2.500 7h6M2.500 8.700h5" stroke="#555" strokeWidth=".9" /></svg>
        <StatusSep />
      </StatusBar>

      <Taskbar>
        <Start><svg width="17" height="17" viewBox="0 0 17 17"><path d="M0 2.500l7-1V8H0zM8 1.300L17 0v8H8zM0 9h7v6.500l-7-1zM8 9h9v8l-9-1.300z" fill="#fff" /></svg></Start>
        <Task $open>
          <svg width="22" height="24" viewBox="0 0 22 24"><path d="M0 2h8l2 3h12v17H0z" fill="#ffd35c" /><path d="M0 2h8l1 3H0z" fill="#e0a21b" /><path d="M5 23v-8h12v8h-4v-4H9v4z" fill="#3a9be0" /></svg>
        </Task>
        <Task $open><Chrome><circle cx="18" cy="16" r="5" fill="#26351d" /><path d="M13 26c0-8 10-8 11 0z" fill="#b08a78" /><circle cx="18" cy="17" r="2" fill="#8a5a40" /></Chrome></Task>
        <Task $open>
          <svg width="25" height="26" viewBox="0 0 25 26"><path d="M18 0l7 3v20l-7 3L7 15.500l-5 4L0 18l5-5-5-5 2-1.500 5 4z" fill="#1f84cc" /><path d="M18 7v12l-8-6z" fill="#1c1c26" /><path d="M18 0l7 3v20l-7 3z" fill="#32a3ee" /></svg>
        </Task>
        <Task $open>
          <svg width="23" height="24" viewBox="0 0 24 24"><circle cx="12" cy="12" r="12" fill="#7a34a8" /><path d="M9 21v-3c-3 .5-3-2-4.500-2.500M9 18c0-1 .3-1.500.7-2-3-.3-5-1.500-5-5 0-1.500.5-2.500 1.300-3.200-.3-1-.2-2.300.2-3 1.200 0 2.200.7 3 1.200 1.600-.4 4-.4 5.600 0 .8-.5 1.800-1.200 3-1.200.4.7.5 2 .2 3 .8.7 1.300 1.700 1.300 3.200 0 3.500-2 4.700-5 5 .5.500.7 1 .7 2v4H9z" fill="#fff" /></svg>
        </Task>
        <Task>
          <svg width="22" height="26" viewBox="0 0 22 26"><path d="M11 0l11 6v14l-11 6-11-6V6z" fill="#b9cf45" /><path d="M0 6l6 3v14l-6-3z" fill="#c2345c" /><path d="M22 6l-6 3v14l6-3z" fill="#2e68a0" /><path d="M6 20l5 3 5-3v3l-5 3-5-3z" fill="#8c3f6c" /><path d="M11 6l6 3v8l-6 4-6-4V9z" fill="#e8efe0" /><path d="M11 12l6-3v8l-6 4z" fill="#bccab5" /></svg>
        </Task>
        <Task $open $active><Dolphin size={24} /></Task>
        <Task><HeidiBase>HS</HeidiBase></Task>
        <Task $open>
          <svg width="24" height="26" viewBox="0 0 24 26"><rect width="24" height="26" rx="3" fill="#f37021" /><path d="M8 6.500h8a3 3 0 0 1 0 6 3 3 0 0 1 0 6.500c-4 0-4-12.500-8-12.500a3 3 0 0 0 0 6 3 3 0 0 0 0 6.500c4 0 4-12.500 8-12.500" fill="none" stroke="#fff" strokeWidth="2.500" /><path d="M9.500 5h5v3h-5z" fill="#f37021" /></svg>
        </Task>
        <Task>
          <CountWrap>
            <svg width="25" height="26" viewBox="0 0 25 26"><path d="M2 24l1.700-6A11 11 0 1 1 8 22.500z" fill="none" stroke="#25d366" strokeWidth="2.200" /><path d="M8 8c1-2 2-1 3 1.500-1 1.500-1 1.500 1 3.500s2.500 2 4 .5c2 1 3 1.500 1.500 3-3 2.500-11-4-9.500-8.500z" fill="#25d366" /></svg>
            <Count $r={-8} $b={-3}>4</Count>
          </CountWrap>
        </Task>
        <Task><PsIcon>Ps</PsIcon></Task>
        <Task $open><Chrome><path d="M14 25l3-9 7 2-2 7z" fill="#e8a33a" /><path d="M16 19l6 3" stroke="#b3261c" strokeWidth="2" /></Chrome></Task>
        <Task $open><HeidiBase>HS</HeidiBase></Task>
        <Tray>
          <svg width="12" height="8" viewBox="0 0 12 8"><path d="M1 7l5-5 5 5" fill="none" stroke="#fff" strokeWidth="1.200" /></svg>
          <Slot $w={36}><svg width="17" height="15" viewBox="0 0 17 15"><path d="M4.500 1.500h12v8h-12zM10 9.500v3M7 13h7M.5 5.500h4v4h-4zM2.500 9.500V14H7" fill="#1c1724" stroke="#fff" /></svg></Slot>
          <svg width="17" height="15" viewBox="0 0 17 15"><path d="M.5 5h3l4-4v13l-4-4h-3zM9.500 5q1.500 2.500 0 5M11.500 3.500q3 4 0 8M13.500 2q4.500 5.500 0 11" fill="none" stroke="#fff" /></svg>
          <TrayText $w={24} $l={8}><Fit w={23}>ENG</Fit><br /><Fit w={23}>INTL</Fit></TrayText>
          <TrayText $w={60} $l={11}><Fit w={28}>18:53</Fit><br /><Fit w={58}>28/02/2025</Fit></TrayText>
          <Slot $w={48}>
            <CountWrap>
              <svg width="17" height="18" viewBox="0 0 17 18"><path d="M0 1h16v13H8l-4 3v-3H0z" fill="#fff" /><path d="M3 4.500h10M3 7.500h10M3 10.500h6" stroke="#1c1724" /></svg>
              <Count $r={-8} $b={-5}>5</Count>
            </CountWrap>
          </Slot>
        </Tray>
      </Taskbar>
    </Screen>
  );
}
